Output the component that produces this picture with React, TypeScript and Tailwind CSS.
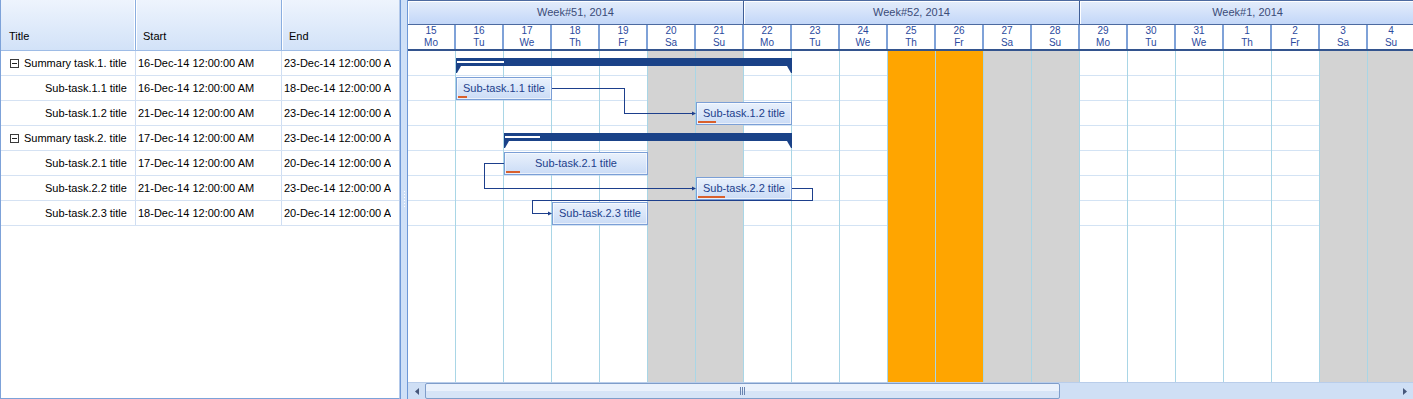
import React from 'react';

type Kind = 'work' | 'weekend' | 'holiday';
type Day = { n: number; d: string; kind: Kind };

const DAY_W = 48;
const ROW_H = 25;

const days: Day[] = [
  { n: 15, d: 'Mo', kind: 'work' },
  { n: 16, d: 'Tu', kind: 'work' },
  { n: 17, d: 'We', kind: 'work' },
  { n: 18, d: 'Th', kind: 'work' },
  { n: 19, d: 'Fr', kind: 'work' },
  { n: 20, d: 'Sa', kind: 'weekend' },
  { n: 21, d: 'Su', kind: 'weekend' },
  { n: 22, d: 'Mo', kind: 'work' },
  { n: 23, d: 'Tu', kind: 'work' },
  { n: 24, d: 'We', kind: 'work' },
  { n: 25, d: 'Th', kind: 'holiday' },
  { n: 26, d: 'Fr', kind: 'holiday' },
  { n: 27, d: 'Sa', kind: 'weekend' },
  { n: 28, d: 'Su', kind: 'weekend' },
  { n: 29, d: 'Mo', kind: 'work' },
  { n: 30, d: 'Tu', kind: 'work' },
  { n: 31, d: 'We', kind: 'work' },
  { n: 1, d: 'Th', kind: 'work' },
  { n: 2, d: 'Fr', kind: 'work' },
  { n: 3, d: 'Sa', kind: 'weekend' },
  { n: 4, d: 'Su', kind: 'weekend' },
];

const weeks = ['Week#51, 2014', 'Week#52, 2014', 'Week#1, 2014'];

type Task = {
  title: string;
  start: string;
  end: string;
  summary?: boolean;
  from: number; // day index
  len: number; // days
  progress: number; // px
};

const tasks: Task[] = [
  { title: 'Summary task.1. title', start: '16-Dec-14 12:00:00 AM', end: '23-Dec-14 12:00:00 AM', summary: true, from: 1, len: 7, progress: 47 },
  { title: 'Sub-task.1.1 title', start: '16-Dec-14 12:00:00 AM', end: '18-Dec-14 12:00:00 AM', from: 1, len: 2, progress: 9 },
  { title: 'Sub-task.1.2 title', start: '21-Dec-14 12:00:00 AM', end: '23-Dec-14 12:00:00 AM', from: 6, len: 2, progress: 18 },
  { title: 'Summary task.2. title', start: '17-Dec-14 12:00:00 AM', end: '23-Dec-14 12:00:00 AM', summary: true, from: 2, len: 6, progress: 35 },
  { title: 'Sub-task.2.1 title', start: '17-Dec-14 12:00:00 AM', end: '20-Dec-14 12:00:00 AM', from: 2, len: 3, progress: 14 },
  { title: 'Sub-task.2.2 title', start: '21-Dec-14 12:00:00 AM', end: '23-Dec-14 12:00:00 AM', from: 6, len: 2, progress: 27 },
  { title: 'Sub-task.2.3 title', start: '18-Dec-14 12:00:00 AM', end: '20-Dec-14 12:00:00 AM', from: 3, len: 2, progress: 0 },
];

const dayBg: Record<Kind, string> = {
  work: 'bg-white',
  weekend: 'bg-[#d3d3d3]',
  holiday: 'bg-[#ffa500]',
};

const TaskGrid: React.FC = () => (
  <div className="flex h-full w-[400px] shrink-0 flex-col border-b border-l border-r border-b-[#7da2d9] border-l-[#7da2d9] border-r-[#b3c9ea] bg-white text-[11px] text-black">
    {/* header */}
    <div className="flex h-[51px] shrink-0 border-b border-[#9ebce6] bg-linear-to-b from-[#eef4fd] to-[#d2e2f8]">
      <div className="flex w-[135px] items-end border-r border-[#8aaee0] pb-[6px] pl-[8px] shadow-[inset_-1px_0_0_#ffffff]">Title</div>
      <div className="flex w-[146px] items-end border-r border-[#8aaee0] pb-[6px] pl-[7px] shadow-[inset_1px_0_0_#ffffff]">Start</div>
      <div className="flex flex-1 items-end pb-[6px] pl-[7px] shadow-[inset_1px_0_0_#ffffff]">End</div>
    </div>
    {tasks.map((t) => (
      <div key={t.title} className="flex h-[25px] shrink-0 border-b border-[#d5e2f3]">
        <div className={`flex w-[135px] items-center whitespace-nowrap border-r border-[#cfdef3] ${t.summary ? 'pl-[9px]' : 'pl-[44px]'}`}>
          {t.summary && (
            <span className="mr-[5px] flex h-[9px] w-[9px] items-center justify-center border border-[#3a3a3a]">
              <span className="h-px w-[5px] bg-[#222]" />
            </span>
          )}
          {t.title}
        </div>
        <div className="flex w-[146px] items-center overflow-hidden whitespace-nowrap border-r border-[#cfdef3] pl-[2px]">{t.start}</div>
        <div className="flex flex-1 items-center pl-[2px]">
          <span className="w-[107px] overflow-hidden whitespace-nowrap">{t.end}</span>
        </div>
      </div>
    ))}
  </div>
);

const Splitter: React.FC = () => (
  <div className="flex h-full w-[8px] shrink-0 flex-col items-center justify-center border-x border-[#6d97d6] bg-[#cfe0f7]">
    <div className="mt-[-2px] flex flex-col gap-[2px]">
      {[0, 1, 2, 3, 4, 5].map((i) => (
        <span key={i} className="h-px w-px bg-white" />
      ))}
    </div>
  </div>
);

const SummaryBar: React.FC<{ t: Task; row: number }> = ({ t, row }) => (
  <div
    className="absolute h-[15px]"
    style={{ left: t.from * DAY_W, top: row * ROW_H + 7, width: t.len * DAY_W }}
  >
    <div className="relative h-[8px] w-full bg-[#1a4288]">
      <div className="absolute left-px top-[3px] h-[2px] bg-white" style={{ width: t.progress }} />
    </div>
    <svg className="absolute left-0 top-[8px]" width="5" height="7" viewBox="0 0 5 7">
      <polygon points="0,0 5,0 1,7 0,7" fill="#1a4288" />
    </svg>
    <svg className="absolute right-0 top-[8px]" width="5" height="7" viewBox="0 0 5 7">
      <polygon points="0,0 5,0 5,7 4,7" fill="#1a4288" />
    </svg>
  </div>
);

const TaskBar: React.FC<{ t: Task; row: number }> = ({ t, row }) => (
  <div
    className="absolute flex h-[23px] items-center justify-center border border-[#7b9fd6] bg-linear-to-b from-[#e9f1fc] to-[#cbdcf6] text-[11px] text-[#223f8c] shadow-[inset_0_0_0_1px_rgba(255,255,255,0.6)]"
    style={{ left: t.from * DAY_W, top: row * ROW_H + 1, width: t.len * DAY_W }}
  >
    <span className="whitespace-nowrap">{t.title}</span>
    {t.progress > 0 && (
      <span className="absolute bottom-[1px] left-[1px] h-[2px] bg-[#d9602c]" style={{ width: t.progress }} />
    )}
  </div>
);

const Connectors: React.FC = () => (
  <svg className="pointer-events-none absolute left-0 top-0" width="1008" height="331" shapeRendering="crispEdges">
    <g stroke="#1d3f8c" strokeWidth="1" fill="none">
      <path d="M144 37.5 H216.5 V62.5 H286" />
      <path d="M96 112.5 H76.5 V137.5 H286" />
      <path d="M384 137.5 H404.5 V149.5 H124.5 V162.5 H142" />
    </g>
    <g fill="#1d3f8c" shapeRendering="auto">
      <polygon points="284,60.5 288,62.5 284,64.5" />
      <polygon points="284,135.5 288,137.5 284,139.5" />
      <polygon points="140,160.5 144,162.5 140,164.5" />
    </g>
  </svg>
);

const Timeline: React.FC = () => (
  <div className="flex h-full w-[1005px] flex-col overflow-hidden">
    {/* week row */}
    <div className="flex h-[25px] w-[1008px] shrink-0 border-y border-[#4c6aa0] bg-white">
      {weeks.map((w) => (
        <div
          key={w}
          className="flex w-[336px] shrink-0 items-center justify-center border-r border-[#3f5e96] bg-linear-to-b from-[#e4edfb] to-[#c3d7f8] text-[11px] text-[#3b4c78] shadow-[inset_1px_1px_0_#ffffff]"
        >
          {w}
        </div>
      ))}
    </div>
    {/* day row */}
    <div className="flex h-[26px] w-[1008px] shrink-0 border-b-2 border-[#33548e] bg-white">
      {days.map((d, i) => (
        <div
          key={i}
          className="flex w-[48px] shrink-0 flex-col items-center justify-center border-r-2 border-[#7fa2d8] text-[10px] leading-[12px] text-[#2b4a9e]"
        >
          <span>{d.n}</span>
          <span>{d.d}</span>
        </div>
      ))}
    </div>
    {/* chart body */}
    <div className="relative w-[1008px] flex-1">
      <div className="flex h-full">
        {days.map((d, i) => (
          <div key={i} className={`flex h-full w-[48px] shrink-0 flex-col border-r border-[#a9d6e6] ${dayBg[d.kind]}`}>
            {d.kind === 'work' &&
              tasks.map((t) => <div key={t.title} className="h-[25px] shrink-0 border-b border-[#d3e3f4]" />)}
          </div>
        ))}
      </div>
      <Connectors />
      {tasks.map((t, row) =>
        t.summary ? <SummaryBar key={t.title} t={t} row={row} /> : <TaskBar key={t.title} t={t} row={row} />
      )}
    </div>
    {/* scrollbar */}
    <div className="flex h-[17px] w-[1005px] shrink-0 items-center border-t border-[#b9cdea] bg-[#cfdff5]">
      <div className="flex h-full w-[17px] shrink-0 items-center justify-center">
        <svg width="4" height="7" viewBox="0 0 4 7">
          <polygon points="4,0 0,3.5 4,7" fill="#47577a" />
        </svg>
      </div>
      <div className="flex h-full w-[635px] shrink-0 items-center justify-center rounded-[2px] border border-[#7f9dca] bg-linear-to-b from-[#eaf1fc] from-50% to-[#d6e4f7] to-50%">
        <div className="flex gap-[1px]">
          <span className="h-[8px] w-px bg-[#6a84b0]" />
          <span className="h-[8px] w-px bg-[#6a84b0]" />
          <span className="h-[8px] w-px bg-[#6a84b0]" />
        </div>
      </div>
      <div className="flex-1" />
      <div className="flex h-full w-[17px] shrink-0 items-center justify-center">
        <svg width="4" height="7" viewBox="0 0 4 7">
          <polygon points="0,0 4,3.5 0,7" fill="#47577a" />
        </svg>
      </div>
    </div>
  </div>
);

export default function App() {
  return (
    <div className="flex h-[399px] w-[1413px] overflow-hidden bg-white font-['Liberation_Sans',Arial,sans-serif]">
      <TaskGrid />
      <Splitter />
      <Timeline />
    </div>
  );
}
